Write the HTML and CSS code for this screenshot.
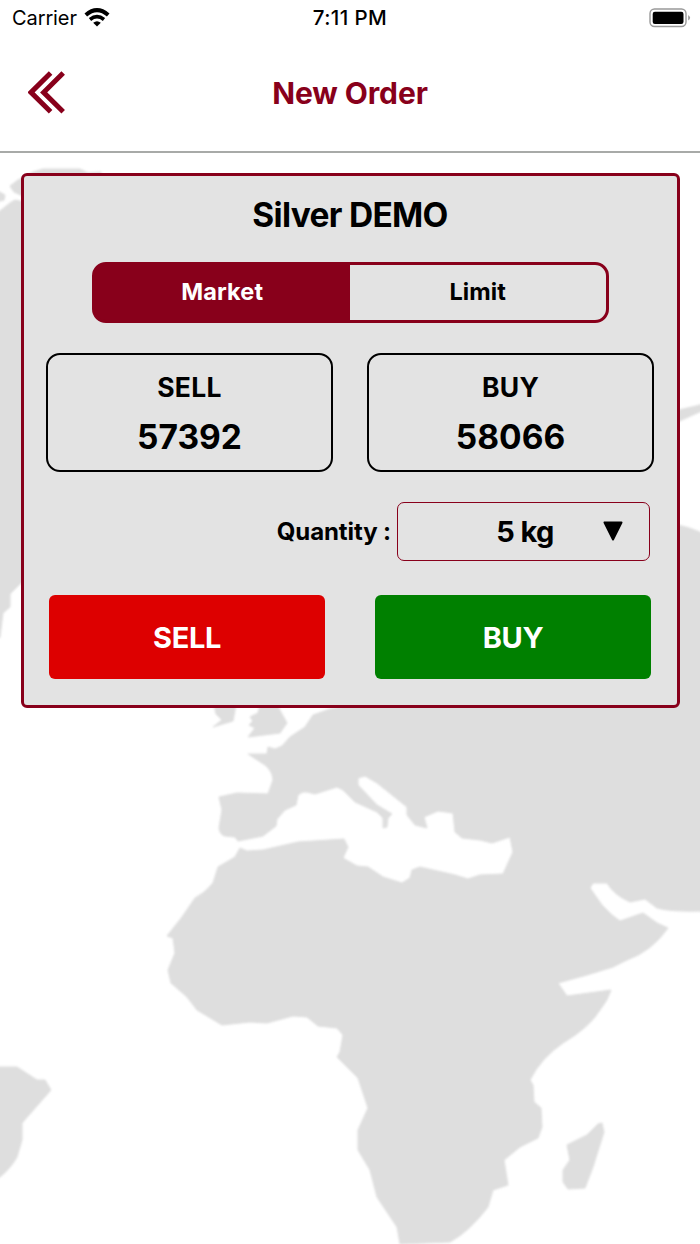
FILE: index.html
```html
<!DOCTYPE html>
<html lang="en">
<head>
  <meta charset="UTF-8">
  <meta name="viewport" content="width=device-width, initial-scale=1.0">
  <title>New Order</title>
  <link rel="stylesheet" href="styles.css">
</head>
<body>
  <!-- World map behind the page -->
  <svg class="map" viewBox="0 0 700 1244" aria-hidden="true">
    <!-- Europe, Asia and Africa -->
    <path d="M330 709L313 715L305 727L290 737L282 746L275 749L268 747L267 754L248 754L265 765Q273 772 273 780L268 794L237 793L219 797L222 810L219 828Q220 835 225 836L235 837L238 841L263 836L276 826L277 819L285 810L296 805L298 795Q302 791 307 792L315 794L337 787L343 790L355 802L377 812L383 818L383 828L387 827L388 818L392 814L377 805L358 785V778L365 776L377 783L407 807V815L415 825L427 828L424 817L438 811L453 813L455 832L462 838L480 840L492 843L510 837L513 852L503 874L480 875L468 879L455 875L420 867L412 870L410 878L402 883L383 877L368 867L357 866L343 858L348 847L344 839L298 842L263 850L247 851L240 848L235 857L218 867L213 883Q205 893 195 898L182 917L167 936L173 938L175 953L168 970L171 983L187 997L197 1010L222 1025L250 1022L267 1023L293 1016L307 1017L318 1026L337 1028L343 1035L340 1052L337 1057L358 1078L368 1108L358 1130V1150L370 1170L377 1197L397 1227L400 1244L450 1242Q470 1231 488 1207L493 1190L508 1185L504 1160L520 1147L538 1138L542 1127L541 1108L534 1102L533 1085L530 1080Q541 1058 563 1043Q590 1027 600 1010Q608 1000 611 990L567 996L558 983L587 975L613 967L627 960Q652 951 668 928L657 923L643 913L620 921L612 915L602 905L590 888L593 883H607Q614 895 630 902L645 899L657 908Q670 912 706 911V535Q690 527 677 525L600 560L500 680Z"/>
    <!-- Madagascar -->
    <path d="M602 1123L604 1132L593 1167L585 1188L568 1189L563 1182V1170L570 1160L567 1145L587 1135L598 1124Z"/>
    <!-- British Isles -->
    <path d="M260 705L258 713L250 717L253 721L249 725L255 728L248 737L280 733L287 723L277 705Z"/>
    <path d="M214 705L216 714L222 720L213 727L233 721L236 705Z"/>
    <!-- South America -->
    <path d="M-4 1067H17L37 1080L45 1080L51 1090L22 1123V1140L17 1157Q10 1170 -4 1180Z"/>
    <!-- North America and Greenland -->
    <path d="M-4 214L10 203L15 200L25 202V579L16 588L10 594V607L3 613L0 637L-4 640Z"/>
    <path d="M-4 190L5 195L4 200L-4 202ZM10 186L18 180L33 172L43 169H80L88 173L101 172V180H25V197L14 192Z"/>
    <path d="M675 411L704 404V410L675 423Z"/>
  </svg>

  <div class="status-bar">
    <div class="carrier">
      <span>Carrier</span>
      <svg class="wifi" viewBox="0 0 26 19">
        <path d="M1.8 7Q13 -2.6 24.2 7" stroke-width="4"/>
        <path d="M6 11.5Q13 5.8 20 11.5" stroke-width="3.6"/>
        <path class="dot" d="M9.2 14.8Q13 11.6 16.8 14.8L13 18.6Z"/>
      </svg>
    </div>
    <div class="time">7:11 PM</div>
    <svg class="battery" viewBox="0 0 42 20">
      <rect class="shell" x="1" y="1" width="36" height="17.5" rx="4.5"/>
      <rect x="3.7" y="3.7" width="30.8" height="12.2" rx="2.2"/>
      <path class="tip" d="M39.2 7Q43 9.8 39.2 12.6Z"/>
    </svg>
  </div>

  <header>
    <button class="back" aria-label="Back">
      <svg viewBox="0 0 38 43">
        <path d="M22.6 2L3 21.4L22.6 40.8M35.2 2L15.6 21.4L35.2 40.8"/>
      </svg>
    </button>
    <h1>New Order</h1>
  </header>

  <main class="order-card">
    <h2>Silver DEMO</h2>

    <div class="order-type">
      <button class="active">Market</button>
      <button>Limit</button>
    </div>

    <div class="prices">
      <div class="price-box">
        <span class="price-label">SELL</span>
        <span class="price">57392</span>
      </div>
      <div class="price-box">
        <span class="price-label">BUY</span>
        <span class="price">58066</span>
      </div>
    </div>

    <div class="quantity">
      <span class="quantity-label">Quantity :</span>
      <div class="quantity-select">
        <span>5 kg</span>
        <svg class="arrow" viewBox="0 0 20 20">
          <path d="M1.5 1.5H18.5L10 18.5Z"/>
        </svg>
      </div>
    </div>

    <div class="actions">
      <button class="sell">SELL</button>
      <button class="buy">BUY</button>
    </div>
  </main>
</body>
</html>
```
FILE: styles.css
```css
* {
  box-sizing: border-box;
}

body {
  margin: 0;
  height: 1244px;
  overflow: hidden;
  font-family: Inter, "Liberation Sans", sans-serif;
  background-color: #ffffff;
  color: #000000;
}

button {
  border: none;
  padding: 0;
  background: none;
  font-family: inherit;
  color: inherit;
  cursor: pointer;
}

.map {
  position: absolute;
  top: 0;
  left: 0;
  width: 700px;
  height: 1244px;
  z-index: -1;
  overflow: visible;
  fill: #dedede;
  stroke: #dedede;
  stroke-width: 1;
  stroke-linejoin: round;
  filter: blur(0.8px);
}

.status-bar {
  display: grid;
  grid-template-columns: 1fr auto 1fr;
  align-items: center;
  height: 36px;
  padding: 0 9px 0 12px;
  font-size: 20px;
}

.carrier {
  display: flex;
  align-items: center;
  gap: 7px;
  letter-spacing: -0.1px;
}

.time {
  margin: -2px 3px 0 0;
  font-weight: 500;
  font-size: 20.5px;
  letter-spacing: 0.4px;
}

.wifi {
  width: 26px;
  height: 19px;
  margin-top: -2px;
  fill: none;
  stroke: #000000;
}

.wifi .dot {
  fill: #000000;
  stroke: none;
}

.battery {
  justify-self: end;
  width: 42px;
  height: 20px;
  margin-top: -1px;
}

.battery .shell {
  fill: none;
  stroke: #999999;
  stroke-width: 1.4;
}

.battery .tip {
  fill: #999999;
}

header {
  display: grid;
  grid-template-columns: 1fr auto 1fr;
  align-items: center;
  height: 117px;
  margin-bottom: -1px;
  padding: 0 28px;
  border-bottom: 2px solid #a8aaa8;
}

.back {
  width: 38px;
  height: 43px;
  margin-top: -2px;
}

.back svg {
  display: block;
  width: 38px;
  height: 43px;
  fill: none;
  stroke: #88001b;
  stroke-width: 5;
}

h1 {
  margin: -2px 0 0;
  font-size: 30px;
  font-weight: 700;
  letter-spacing: -0.1px;
  color: #88001b;
}

.order-card {
  height: 535px;
  margin: 21px 20.5px 0;
  padding: 0 22.5px;
  background-color: #e3e3e3;
  border: 3px solid #88001b;
  border-radius: 6px;
}

h2 {
  margin: 0;
  padding-top: 19px;
  line-height: 40px;
  font-size: 33.5px;
  font-weight: 700;
  letter-spacing: -0.7px;
  text-align: center;
}

.order-type {
  display: flex;
  width: 517px;
  height: 61px;
  margin: 27px auto 0;
  background: linear-gradient(to right, #88001b 50%, transparent 50%);
  border: 3px solid #88001b;
  border-radius: 14px;
}

.order-type button {
  flex: 1;
  padding-bottom: 2px;
  font-size: 23.5px;
  font-weight: 700;
  letter-spacing: 0.1px;
}

.order-type .active {
  color: #ffffff;
}

.prices {
  display: flex;
  gap: 34px;
  margin-top: 30px;
}

.price-box {
  flex: 1;
  display: flex;
  flex-direction: column;
  align-items: center;
  height: 119px;
  padding-top: 12px;
  border: 2px solid #000000;
  border-radius: 14px;
}

.price-label {
  line-height: 40px;
  font-size: 26.5px;
  font-weight: 700;
  letter-spacing: 0.3px;
}

.price {
  margin-top: 10px;
  line-height: 40px;
  font-size: 33.5px;
  font-weight: 700;
}

.quantity {
  display: flex;
  justify-content: flex-end;
  align-items: center;
  gap: 6px;
  margin: 30px 4px 0 0;
}

.quantity-label {
  font-size: 24px;
  font-weight: 700;
  letter-spacing: -0.1px;
}

.quantity-select {
  position: relative;
  width: 253px;
  height: 59px;
  padding-left: 3px;
  border: 1px solid #88001b;
  border-radius: 7px;
  text-align: center;
  line-height: 57px;
  font-size: 29px;
  font-weight: 700;
  letter-spacing: -0.6px;
}

.arrow {
  position: absolute;
  top: 18px;
  right: 26px;
  width: 20px;
  height: 20px;
  stroke: #000000;
  stroke-width: 2;
  stroke-linejoin: round;
}

.actions {
  display: flex;
  gap: 50px;
  margin: 34px 3px 0;
}

.actions button {
  flex: 1;
  height: 84px;
  border-radius: 6px;
  font-size: 29px;
  font-weight: 700;
  letter-spacing: -0.4px;
  color: #ffffff;
}

.sell {
  background-color: #dd0000;
}

.buy {
  background-color: #008000;
}
```
